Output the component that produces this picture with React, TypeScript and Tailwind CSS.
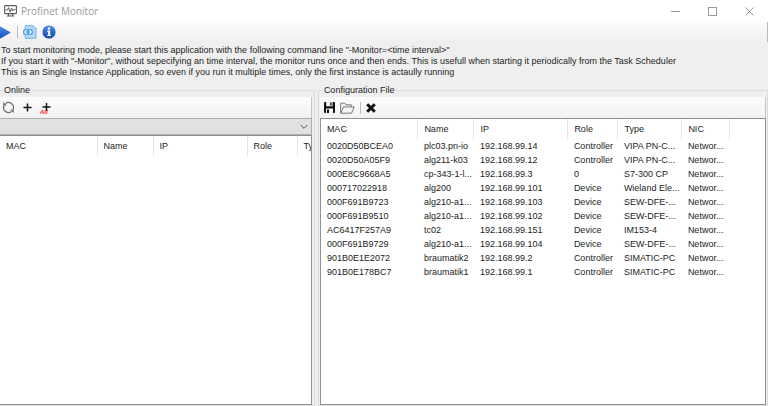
import React, { useState } from "react";

type Station = {
  mac: string;
  name: string;
  ip: string;
  role: string;
  type: string;
  nic: string;
};

const onlineColumns = ["MAC", "Name", "IP", "Role", "Type"];
const configColumns = ["MAC", "Name", "IP", "Role", "Type", "NIC"];

const configStations: Array<Station> = [
  { mac: "0020D50BCEA0", name: "plc03.pn-io", ip: "192.168.99.14", role: "Controller", type: "VIPA PN-C...", nic: "Networ..." },
  { mac: "0020D50A05F9", name: "alg211-k03", ip: "192.168.99.12", role: "Controller", type: "VIPA PN-C...", nic: "Networ..." },
  { mac: "000E8C9668A5", name: "cp-343-1-l...", ip: "192.168.99.3", role: "0", type: "S7-300 CP", nic: "Networ..." },
  { mac: "000717022918", name: "alg200", ip: "192.168.99.101", role: "Device", type: "Wieland Ele...", nic: "Networ..." },
  { mac: "000F691B9723", name: "alg210-a1...", ip: "192.168.99.103", role: "Device", type: "SEW-DFE-...", nic: "Networ..." },
  { mac: "000F691B9510", name: "alg210-a1...", ip: "192.168.99.102", role: "Device", type: "SEW-DFE-...", nic: "Networ..." },
  { mac: "AC6417F257A9", name: "tc02", ip: "192.168.99.151", role: "Device", type: "IM153-4", nic: "Networ..." },
  { mac: "000F691B9729", name: "alg210-a1...", ip: "192.168.99.104", role: "Device", type: "SEW-DFE-...", nic: "Networ..." },
  { mac: "901B0E1E2072", name: "braumatik2", ip: "192.168.99.2", role: "Controller", type: "SIMATIC-PC", nic: "Networ..." },
  { mac: "901B0E178BC7", name: "braumatik1", ip: "192.168.99.1", role: "Controller", type: "SIMATIC-PC", nic: "Networ..." },
];

const MonitorIcon = () => (
  <svg width="13" height="12" viewBox="0 0 13 12" fill="none" stroke="#5c5c5c">
    <rect x="0.6" y="0.6" width="11.8" height="8" rx="0.6" strokeWidth="1.1" />
    <path d="M1.5 5h2l1-2.4 1.6 4.4L7.6 3l1 3 .9-1.4h2" strokeWidth="1" />
    <path d="M4.5 9v1.5M8.5 9v1.5M2.8 11h7.4" strokeWidth="1.1" />
  </svg>
);

const PlayIcon = () => (
  <svg width="12" height="13" viewBox="0 0 12 13">
    <defs>
      <linearGradient id="play" x1="0" y1="0" x2="0" y2="1">
        <stop offset="0" stopColor="#4a8be6" />
        <stop offset="1" stopColor="#1b50bd" />
      </linearGradient>
    </defs>
    <path d="M0 0.3 L10.8 6.5 L0 12.7Z" fill="url(#play)" />
  </svg>
);

const XmlIcon = () => (
  <svg width="14" height="14" viewBox="0 0 14 14">
    <path d="M2.2.7h8l2.8 2.8v9.8H2.2z" fill="#b5d9f7" stroke="#75afe6" />
    <path d="M10.2.7v2.8H13z" fill="#f3faff" stroke="#75afe6" strokeWidth=".6" />
    <rect x="0" y="4" width="10" height="6" rx="2" fill="#5ba3e8" />
    <path d="M3.6 5.2 1.8 7l1.8 1.8M6.4 5.2 8.2 7 6.4 8.8" fill="none" stroke="#fff" strokeWidth="1.1" />
  </svg>
);

const InfoIcon = () => (
  <svg width="14" height="14" viewBox="0 0 14 14">
    <defs>
      <linearGradient id="info" x1="0" y1="0" x2="0" y2="1">
        <stop offset="0" stopColor="#4b8ae6" />
        <stop offset="1" stopColor="#1747ae" />
      </linearGradient>
    </defs>
    <circle cx="7" cy="7" r="6.6" fill="url(#info)" />
    <circle cx="7" cy="3.5" r="1.3" fill="#fff" />
    <path d="M5.2 5.6h2.9v4.3h1v1.2H5.2V9.9h1V6.8h-1z" fill="#fff" />
  </svg>
);

const RefreshIcon = () => (
  <svg width="13" height="13" viewBox="0 0 13 13" fill="none" stroke="#6a6a6a" strokeWidth="1.2">
    <path d="M3.5 2.5A5 5 0 0 1 11.2 8.2M9.5 10.5A5 5 0 0 1 1.8 4.8" />
    <path d="M1.8 4.8A5 5 0 0 0 1.6 7.5" />
    <path d="M1.2 1v3.6h3.6zM11.8 12V8.4H8.2z" fill="#6a6a6a" stroke="none" />
  </svg>
);

const PlusIcon = () => (
  <svg width="9" height="9" viewBox="0 0 9 9" stroke="#111" strokeWidth="1.5">
    <path d="M4.5.5v8M.5 4.5h8" />
  </svg>
);

const PlusAllIcon = () => (
  <svg width="11" height="12" viewBox="0 0 11 12">
    <path d="M6.5 1v8M2.5 5h8" stroke="#111" strokeWidth="1.5" />
    <text x="0" y="12" fontSize="6" fontWeight="bold" fontStyle="italic" fill="#ff1a1a">
      All
    </text>
  </svg>
);

const SaveIcon = () => (
  <svg width="11" height="11" viewBox="0 0 11 11">
    <path d="M0 1a1 1 0 0 1 1-1h9a1 1 0 0 1 1 1v9a1 1 0 0 1-1 1H1a1 1 0 0 1-1-1z" fill="#111" />
    <path d="M2.2 0h6.4v4.2H2.2zM2 6.6h7V11H2z" fill="#f5f5f5" />
    <path d="M6.2.6h1.4v2.8H6.2zM3 7.6h2v3.4H3z" fill="#111" />
  </svg>
);

const FolderIcon = () => (
  <svg width="15" height="12" viewBox="0 0 15 12" fill="none" stroke="#767676" strokeWidth="1">
    <path d="M.7 11V1.2h4l1.2 1.6h5.4v2" />
    <path d="M.8 11.2 3.5 4.9h10.7l-2.6 6.3z" />
  </svg>
);

const DeleteIcon = () => (
  <svg width="10" height="10" viewBox="0 0 10 10">
    <path d="M1.2 1.2 8.8 8.8M8.8 1.2 1.2 8.8" stroke="#111" strokeWidth="3" />
  </svg>
);

const Separator = () => <span className="h-3 w-px bg-[#bdbdbd]" />;

interface ToolButtonProps {
  label: string;
  children: React.ReactNode;
}

const ToolButton = ({ label, children }: ToolButtonProps) => (
  <button type="button" aria-label={label} className="flex shrink-0 items-center justify-center">
    {children}
  </button>
);

interface GroupProps {
  title: string;
  className: string;
  children: React.ReactNode;
}

const Group = ({ title, className, children }: GroupProps) => (
  <fieldset className={"flex min-w-0 flex-col border border-[#dcdcdc] " + className}>
    <legend className="ml-0.5 px-0.5 pb-px leading-3">{title}</legend>
    {children}
  </fieldset>
);

interface StationTableProps {
  columns: Array<string>;
  stations: Array<Station>;
}

const StationTable = ({ columns, stations }: StationTableProps) => (
  <table className="w-full min-w-[409px] table-fixed border-collapse text-left whitespace-nowrap">
    <colgroup>
      <col className="w-[97px]" />
      <col className="w-[56px]" />
      <col className="w-[94px]" />
      <col className="w-[50px]" />
      <col className="w-[64px]" />
      <col className="w-[48px]" />
      <col />
    </colgroup>
    <thead>
      <tr className="h-5">
        {columns.map((column) => (
          <th key={column} className="border-r border-[#e4e4e4] pl-1.5 font-normal">
            {column}
          </th>
        ))}
        <td />
      </tr>
    </thead>
    <tbody>
      {stations.map((item) => (
        <tr key={item.mac} className="h-3.5">
          <td className="pl-1.5">{item.mac}</td>
          <td className="pl-1.5">{item.name}</td>
          <td className="pl-1.5">{item.ip}</td>
          <td className="pl-1.5">{item.role}</td>
          <td className="pl-1.5">{item.type}</td>
          <td className="pl-1.5">{item.nic}</td>
          <td />
        </tr>
      ))}
    </tbody>
  </table>
);

const App = () => {
  const [adapter, setAdapter] = useState<string>("");

  return (
    <div className="flex min-h-screen flex-col overflow-hidden bg-[#efefef] font-['Liberation_Sans',sans-serif] text-[9px] leading-[14px] text-[#1c1c1c]">
      <header className="flex h-[22px] items-center bg-white pl-1">
        <MonitorIcon />
        <h1 className="ml-1 flex-1 font-['Open_Sans',sans-serif] text-[10px] text-[#999]">
          Profinet Monitor
        </h1>
        <div className="flex items-center gap-7 pr-3.5 text-[#999]">
          <ToolButton label="Minimize">
            <svg width="9" height="9" viewBox="0 0 9 9" stroke="currentColor">
              <path d="M0 4.5h9" />
            </svg>
          </ToolButton>
          <ToolButton label="Maximize">
            <svg width="9" height="9" viewBox="0 0 9 9" fill="none" stroke="currentColor">
              <rect x=".5" y=".5" width="8" height="8" />
            </svg>
          </ToolButton>
          <ToolButton label="Close">
            <svg width="9" height="9" viewBox="0 0 9 9" stroke="currentColor">
              <path d="M.5.5l8 8M8.5.5l-8 8" />
            </svg>
          </ToolButton>
        </div>
      </header>

      <div className="flex h-5 items-center gap-[5px] border-r border-[#b8b8b8] bg-linear-to-b from-[#fdfdfd] to-[#efefef]">
        <ToolButton label="Start">
          <PlayIcon />
        </ToolButton>
        <Separator />
        <ToolButton label="Open XML">
          <XmlIcon />
        </ToolButton>
        <ToolButton label="About">
          <InfoIcon />
        </ToolButton>
      </div>

      <div className="pt-[3px] pb-1.5 pl-px leading-[11px] whitespace-nowrap">
        <p>To start monitoring mode, please start this application with the following command line "-Monitor=&lt;time interval&gt;"</p>
        <p>If you start it with "-Monitor", without sepecifying an time interval, the monitor runs once and then ends. This is usefull when starting it periodically from the Task Scheduler</p>
        <p>This is an Single Instance Application, so even if you run it multiple times, only the first instance is actaully running</p>
      </div>

      <main className="flex flex-1 gap-[3px]">
        <Group title="Online" className="w-[41%] border-l-0 pr-0.5">
          <div className="flex h-[21px] items-center gap-2 border-r border-[#c4c4c4] bg-linear-to-b from-[#fdfdfd] to-[#f1f1f1] pl-0.5">
            <ToolButton label="Refresh">
              <RefreshIcon />
            </ToolButton>
            <ToolButton label="Add">
              <PlusIcon />
            </ToolButton>
            <ToolButton label="Add all">
              <PlusAllIcon />
            </ToolButton>
          </div>
          <div className="relative">
            <select
              aria-label="Network adapter"
              value={adapter}
              onChange={(e) => setAdapter(e.target.value)}
              className="block h-[17px] w-full appearance-none border border-l-0 border-[#adadad] bg-[#e1e1e1]"
            >
              <option value=""></option>
            </select>
            <svg className="pointer-events-none absolute top-1.5 right-1" width="8" height="6" viewBox="0 0 8 6" fill="none" stroke="#555">
              <path d="M.7 1 4 4.3 7.3 1" />
            </svg>
          </div>
          <div className="flex-1 overflow-hidden border border-l-0 border-[#8c929b] bg-white">
            <StationTable columns={onlineColumns} stations={[]} />
          </div>
        </Group>

        <Group title="Configuration File" className="flex-1 px-px">
          <div className="flex h-[21px] items-center gap-[5px] border-r border-[#c4c4c4] bg-linear-to-b from-[#fdfdfd] to-[#f1f1f1] pl-1">
            <ToolButton label="Save">
              <SaveIcon />
            </ToolButton>
            <ToolButton label="Open">
              <FolderIcon />
            </ToolButton>
            <Separator />
            <ToolButton label="Delete">
              <DeleteIcon />
            </ToolButton>
          </div>
          <div className="flex-1 overflow-hidden border border-[#8c929b] bg-white">
            <StationTable columns={configColumns} stations={configStations} />
          </div>
        </Group>
      </main>
    </div>
  );
};

export default App;
